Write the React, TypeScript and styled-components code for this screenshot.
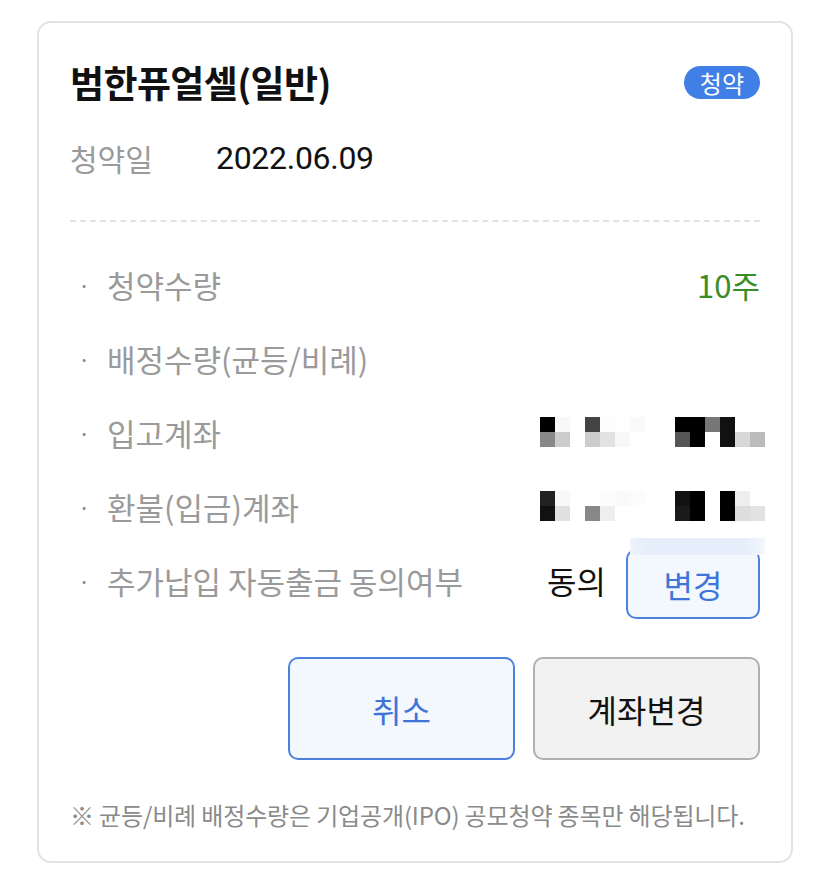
import React from 'react';
import styled, { createGlobalStyle } from 'styled-components';

const GlobalStyle = createGlobalStyle`
  body {
    margin: 0;
    background: #ffffff;
    font-family: "Noto Sans CJK KR", "Noto Sans", sans-serif;
  }
`;

const Page = styled.div`
  padding: 21px 35px 20px 37px;
`;

const Card = styled.div`
  width: 756px;
  box-sizing: border-box;
  border: 2px solid #e3e3e3;
  border-radius: 14px;
  padding: 34px 31px 31px 31px;
  display: flex;
  flex-direction: column;
`;

const TitleRow = styled.div`
  height: 50px;
  display: flex;
  align-items: center;
  justify-content: space-between;
`;

const Title = styled.h1`
  margin: 0;
  font-size: 37px;
  font-weight: 700;
  color: #111;
  letter-spacing: -0.6px;
`;

const Badge = styled.span`
  background: #3f7fe6;
  color: #fff;
  font-size: 24px;
  line-height: 33px;
  padding: 0 16px;
  border-radius: 17px;
`;

const DateRow = styled.div`
  margin-top: 26px;
  height: 50px;
  display: flex;
  align-items: center;
`;

const DateLabel = styled.span`
  color: #9a9a9a;
  width: 146px;
  font-size: 30px;
`;

const DateValue = styled.span`
  color: #111;
  font-family: Roboto, "Noto Sans", sans-serif;
  font-size: 32px;
  letter-spacing: -0.3px;
`;

const Divider = styled.div`
  margin-top: 37px;
  border-top: 2px dashed #e2e2e2;
`;

const List = styled.div`
  margin-top: 25px;
  display: flex;
  flex-direction: column;
`;

const Row = styled.div`
  height: 74px;
  display: flex;
  align-items: center;
  justify-content: space-between;
  position: relative;
`;

const Label = styled.span`
  display: flex;
  align-items: center;
  color: #9a9a9a;
  font-size: 31px;
  &::before {
    content: '·';
    width: 37px;
    padding-left: 8px;
    box-sizing: border-box;
    font-size: 22px;
    color: #888;
  }
`;

const Green = styled.span`
  color: #3a8c26;
  font-size: 31px;
`;

const Agree = styled.div`
  display: flex;
  align-items: center;
  gap: 20px;
  font-size: 32px;
  color: #111;
`;

const SmallButton = styled.button`
  width: 134px;
  height: 70px;
  box-sizing: border-box;
  margin-top: 8px;
  border: 2px solid #4c82dc;
  border-radius: 10px;
  background: #f3f7fe;
  color: #3f74d8;
  font-family: inherit;
  font-size: 32px;
`;

const Strip = styled.div`
  position: absolute;
  top: -5px;
  right: -5px;
  width: 135px;
  height: 17px;
  background: linear-gradient(90deg, #eef3fc 0%, #e6eefb 12%, #e6eefb 85%, #f4f7fd 100%);
`;

const Mosaic = styled.div`
  display: grid;
  grid-template-columns: repeat(15, 15px);
  grid-auto-rows: 15px;
  margin-right: -5px;
`;

const Cell = styled.div<{ $c: string }>`
  background: ${p => p.$c};
`;

const Buttons = styled.div`
  margin-top: 40px;
  display: flex;
  justify-content: flex-end;
  gap: 18px;
`;

const BigButton = styled.button<{ $primary?: boolean }>`
  width: 227px;
  height: 103px;
  box-sizing: border-box;
  border-radius: 10px;
  border: 2px solid ${p => (p.$primary ? '#4c82dc' : '#b0b0b0')};
  background: ${p => (p.$primary ? '#f3f7fe' : '#f2f2f2')};
  color: ${p => (p.$primary ? '#3f74d8' : '#111')};
  font-family: inherit;
  font-size: 32px;
`;

const Note = styled.p`
  margin: 40px 0 0 0;
  line-height: 30px;
  font-size: 24px;
  color: #8a8a8a;
  letter-spacing: -0.15px;
  white-space: nowrap;
`;

const W = '#ffffff';

const mosaicA = [
  ['#000', '#f8f8f8', W, '#444', '#fdfdfd', W, '#fafafa', W, W, '#000', '#000', '#777', '#111', W, W],
  ['#888', '#ccc', W, '#ccc', '#e2e2e2', '#f8f8f8', W, W, W, '#555', '#000', W, '#111', '#d8d8d8', '#bbb'],
];

const mosaicB = [
  ['#222', '#f8f8f8', W, W, '#fcfcfc', '#fafafa', '#fcfcfc', W, W, '#111', '#000', W, '#000', '#eee', W],
  ['#111', '#e0e0e0', W, '#888', '#eee', W, W, W, W, '#1a1a1a', '#000', W, '#000', '#ddd', '#e2e2e2'],
];

const Masked: React.FC<{ data: string[][] }> = ({ data }) => (
  <Mosaic>
    {data.flat().map((c, i) => (
      <Cell key={i} $c={c} />
    ))}
  </Mosaic>
);

export default function App() {
  return (
    <Page>
      <GlobalStyle />
      <Card>
        <TitleRow>
          <Title>범한퓨얼셀(일반)</Title>
          <Badge>청약</Badge>
        </TitleRow>
        <DateRow>
          <DateLabel>청약일</DateLabel>
          <DateValue>2022.06.09</DateValue>
        </DateRow>
        <Divider />
        <List>
          <Row>
            <Label>청약수량</Label>
            <Green>10주</Green>
          </Row>
          <Row>
            <Label>배정수량(균등/비례)</Label>
          </Row>
          <Row>
            <Label>입고계좌</Label>
            <Masked data={mosaicA} />
          </Row>
          <Row>
            <Label>환불(입금)계좌</Label>
            <Masked data={mosaicB} />
          </Row>
          <Row>
            <Label>추가납입 자동출금 동의여부</Label>
            <Agree>
              동의
              <SmallButton>변경</SmallButton>
            </Agree>
            <Strip />
          </Row>
        </List>
        <Buttons>
          <BigButton $primary>취소</BigButton>
          <BigButton>계좌변경</BigButton>
        </Buttons>
        <Note>※ 균등/비례 배정수량은 기업공개(IPO) 공모청약 종목만 해당됩니다.</Note>
      </Card>
    </Page>
  );
}
